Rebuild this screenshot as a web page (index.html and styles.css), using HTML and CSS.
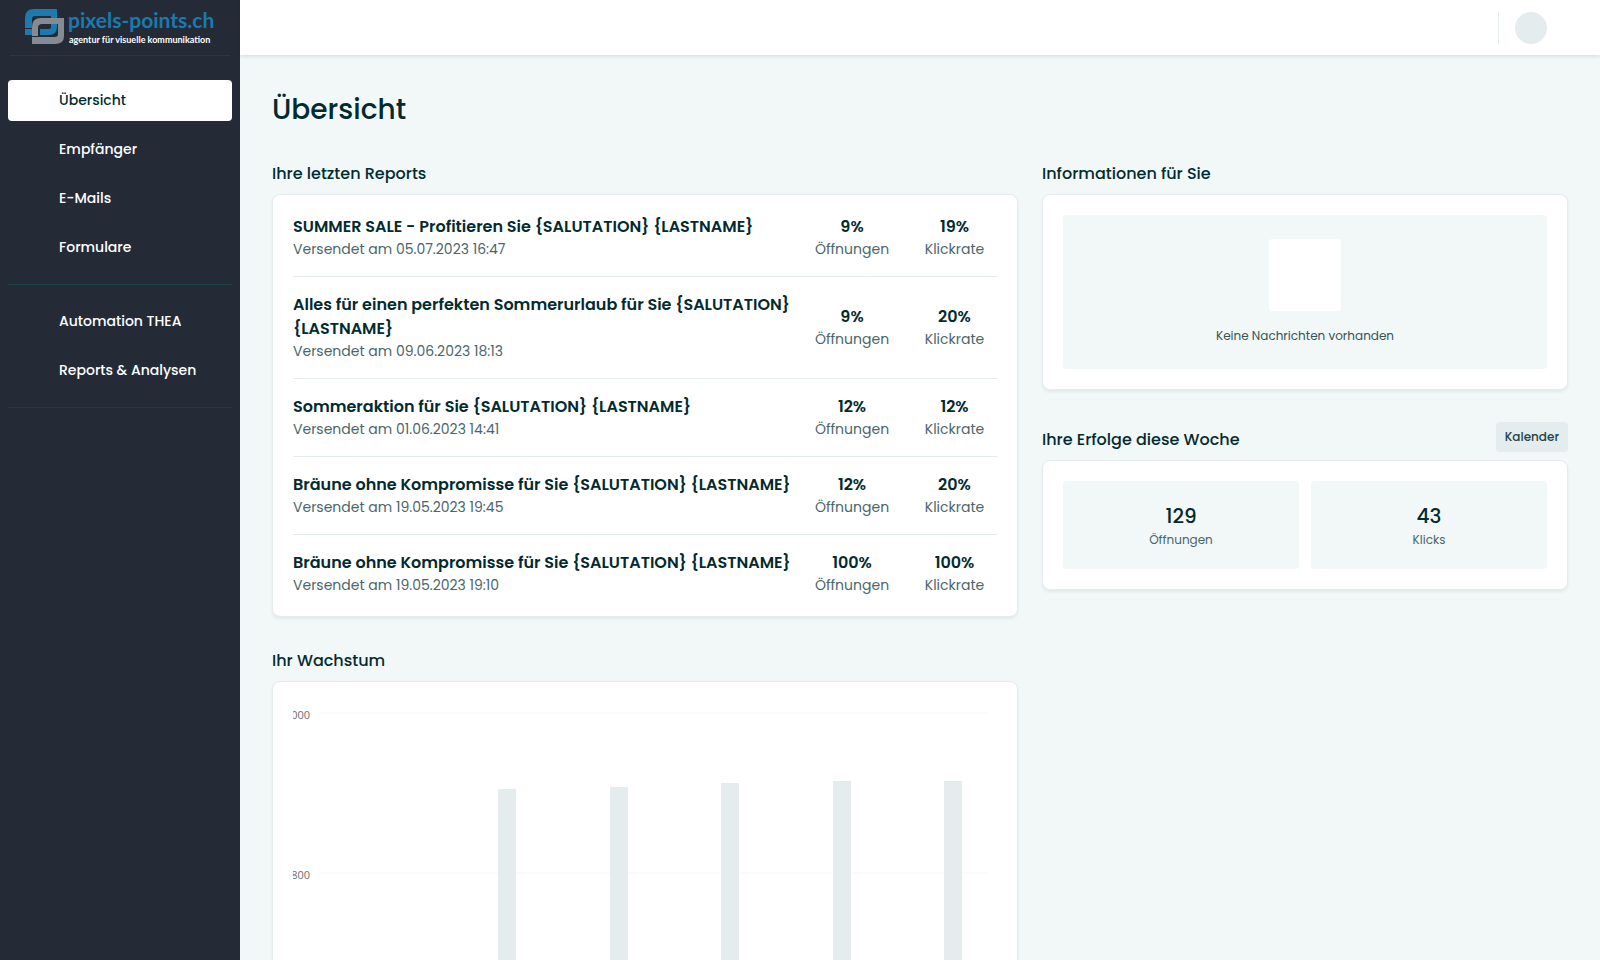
FILE: index.html
```html
<!DOCTYPE html>
<html lang="de">
<head>
    <meta charset="UTF-8">
    <meta name="viewport" content="width=device-width, initial-scale=1">
    <title>Übersicht</title>
    <link rel="stylesheet" href="styles.css">
</head>
<body>
    <aside class="sidebar">
        <a href="#" class="logo">
            <svg width="196" height="38" viewBox="0 0 196 38">
                <path fill="#1b7aae" d="M9 1H32V12H26V8H10Q7 8 7 11V20H0V10Q0 1 9 1Z"/>
                <path fill="#1b7aae" d="M0 21H7V27H0ZM15 21H24Q26 21 26 19V13H32V19Q32 27 24 27H15Z"/>
                <path fill="#868a93" d="M16 10H39V28Q39 36 30 36H7V29H30Q33 29 33 26V16H17Q13 16 13 20V28H7V19Q7 10 16 10Z"/>
                <text class="logo-name" x="43" y="20">pixels-points.ch</text>
                <text class="logo-claim" x="44" y="35">agentur für visuelle kommunikation</text>
            </svg>
        </a>
        <nav class="nav">
            <a href="#" class="nav-link active">Übersicht</a>
            <a href="#" class="nav-link">Empfänger</a>
            <a href="#" class="nav-link">E-Mails</a>
            <a href="#" class="nav-link">Formulare</a>
        </nav>
        <nav class="nav">
            <a href="#" class="nav-link">Automation THEA</a>
            <a href="#" class="nav-link">Reports &amp; Analysen</a>
        </nav>
    </aside>

    <div class="page">
        <header class="topbar">
            <div class="account"><button class="avatar" type="button" aria-label="Konto"></button></div>
        </header>

        <main class="content">
            <h1>Übersicht</h1>
            <div class="row">
                <div class="col-main">
                    <section class="section">
                        <div class="section-head"><h2>Ihre letzten Reports</h2></div>
                        <div class="card">
                            <table class="reports">
                                <tr>
                                    <td><a href="#">SUMMER SALE - Profitieren Sie {SALUTATION} {LASTNAME}</a><span>Versendet am 05.07.2023 16:47</span></td>
                                    <td class="opens"><b>9%</b><span>Öffnungen</span></td>
                                    <td class="clicks"><b>19%</b><span>Klickrate</span></td>
                                </tr>
                                <tr>
                                    <td><a href="#">Alles für einen perfekten Sommerurlaub für Sie {SALUTATION} {LASTNAME}</a><span>Versendet am 09.06.2023 18:13</span></td>
                                    <td class="opens"><b>9%</b><span>Öffnungen</span></td>
                                    <td class="clicks"><b>20%</b><span>Klickrate</span></td>
                                </tr>
                                <tr>
                                    <td><a href="#">Sommeraktion für Sie {SALUTATION} {LASTNAME}</a><span>Versendet am 01.06.2023 14:41</span></td>
                                    <td class="opens"><b>12%</b><span>Öffnungen</span></td>
                                    <td class="clicks"><b>12%</b><span>Klickrate</span></td>
                                </tr>
                                <tr>
                                    <td><a href="#">Bräune ohne Kompromisse für Sie {SALUTATION} {LASTNAME}</a><span>Versendet am 19.05.2023 19:45</span></td>
                                    <td class="opens"><b>12%</b><span>Öffnungen</span></td>
                                    <td class="clicks"><b>20%</b><span>Klickrate</span></td>
                                </tr>
                                <tr>
                                    <td><a href="#">Bräune ohne Kompromisse für Sie {SALUTATION} {LASTNAME}</a><span>Versendet am 19.05.2023 19:10</span></td>
                                    <td class="opens"><b>100%</b><span>Öffnungen</span></td>
                                    <td class="clicks"><b>100%</b><span>Klickrate</span></td>
                                </tr>
                            </table>
                        </div>
                    </section>

                    <section class="section">
                        <div class="section-head"><h2>Ihr Wachstum</h2></div>
                        <div class="card">
                            <svg class="chart" viewBox="0 0 704 840">
                                <g class="grid-lines">
                                    <path d="M25 11H694M25 171H694M25 331H694M25 491H694M25 651H694M25 811H694"/>
                                </g>
                                <g class="axis">
                                    <text x="17" y="17">000</text>
                                    <text x="17" y="177">800</text>
                                </g>
                                <g class="bars">
                                    <rect x="205" y="87" width="18" height="724"/>
                                    <rect x="317" y="85" width="18" height="726"/>
                                    <rect x="428" y="81" width="18" height="730"/>
                                    <rect x="540" y="79" width="18" height="732"/>
                                    <rect x="651" y="79" width="18" height="732"/>
                                </g>
                            </svg>
                        </div>
                    </section>
                </div>

                <div class="col-side">
                    <section class="section">
                        <div class="section-head"><h2>Informationen für Sie</h2></div>
                        <div class="card">
                            <div class="empty">
                                <div class="empty-icon"></div>
                                <p>Keine Nachrichten vorhanden</p>
                            </div>
                        </div>
                    </section>

                    <section class="section">
                        <div class="section-head">
                            <h2>Ihre Erfolge diese Woche</h2>
                            <button class="btn" type="button">Kalender</button>
                        </div>
                        <div class="card stats">
                            <div class="stat"><strong>129</strong><span>Öffnungen</span></div>
                            <div class="stat"><strong>43</strong><span>Klicks</span></div>
                        </div>
                    </section>
                </div>
            </div>
        </main>
    </div>
</body>
</html>
```
FILE: styles.css
```css
* {
    box-sizing: border-box;
}

body {
    display: flex;
    height: 100vh;
    margin: 0;
    overflow: hidden;
    background: #f2f8f8;
    color: #022b30;
    font-family: Poppins, Inter, sans-serif;
    font-size: 14px;
    line-height: 21px;
}

h1, h2, p {
    margin: 0;
}

a {
    color: inherit;
    text-decoration: none;
}

/* Sidebar */
.sidebar {
    flex: 0 0 240px;
    padding: 0 8px;
    background: #242b37;
}

.logo {
    display: block;
    height: 56px;
    margin: 0 2px 24px;
    padding: 8px 0 0 15px;
    border-bottom: 1px solid #203f45;
}

.logo svg {
    display: block;
}

.logo-name {
    fill: #1b7aae;
    font: bold 21px Lato, sans-serif;
}

.logo-claim {
    fill: #fff;
    font: bold 9px Lato, sans-serif;
}

.nav {
    display: flex;
    flex-direction: column;
    gap: 8px;
    margin-bottom: 16px;
    padding-bottom: 16px;
    border-bottom: 1px solid #1b4145;
}

.nav-link {
    padding: 10px 12px 10px 51px;
    border-radius: 4px;
    color: #fff;
    font-weight: 500;
}

.nav-link.active {
    background: #fff;
    color: #022b30;
}

/* Page */
.page {
    display: flex;
    flex: 1;
    flex-direction: column;
    min-width: 0;
}

.topbar {
    z-index: 1;
    display: flex;
    flex: 0 0 55px;
    align-items: center;
    justify-content: flex-end;
    padding-right: 53px;
    background: #fff;
    box-shadow: 0 1px 4px rgba(2, 43, 48, 0.15);
}

.account {
    padding-left: 16px;
    border-left: 1px solid #e4ecee;
}

.avatar {
    display: block;
    width: 32px;
    height: 32px;
    padding: 0;
    border: none;
    border-radius: 50%;
    background: #e4ecee;
}

.content {
    flex: 1;
    padding: 32px;
    overflow-y: auto;
    scrollbar-width: none;
}

h1 {
    margin-bottom: 30px;
    font-size: 28px;
    font-weight: 500;
    line-height: 45px;
}

h2 {
    font-size: 16px;
    font-weight: 500;
    line-height: 24px;
}

.row {
    display: grid;
    grid-template-columns: repeat(12, 1fr);
    gap: 24px;
}

.col-main {
    grid-column: span 7;
}

.col-side {
    grid-column: span 5;
}

.section {
    margin-bottom: 32px;
}

.section-head {
    display: flex;
    align-items: flex-end;
    justify-content: space-between;
    margin-bottom: 8px;
}

.card {
    padding: 20px;
    border: 1px solid #e4ecee;
    border-radius: 8px;
    background: #fff;
    box-shadow: 0 2px 3px rgba(2, 43, 48, 0.07);
}

.btn {
    height: 30px;
    padding: 0 9px;
    border: none;
    border-radius: 4px;
    background: #e4ecee;
    color: #1d4449;
    font: 500 12px Poppins, Inter, sans-serif;
}

/* Reports */
.reports {
    width: 100%;
    border-collapse: collapse;
}

.reports td {
    padding: 16px 0;
    border-bottom: 1px solid #e4ecee;
}

.reports tr:first-child td {
    padding-top: 0;
}

.reports tr:last-child td {
    padding-bottom: 0;
    border-bottom: none;
}

.reports a,
.reports b {
    display: block;
    font-size: 16px;
    font-weight: 600;
    line-height: 24px;
}

.reports span {
    display: block;
    color: #4a666b;
}

.reports .opens {
    width: 120px;
    text-align: center;
}

.reports .clicks {
    width: 85px;
    text-align: center;
}

/* Chart */
.chart {
    display: block;
    width: 100%;
    overflow: hidden;
}

.grid-lines {
    fill: none;
    stroke: #fafbfb;
    stroke-width: 2;
}

.axis {
    fill: #6e6e6e;
    font: 11px "Open Sans", sans-serif;
    text-anchor: end;
}

.bars {
    fill: #e4ecee;
}

/* Side cards */
.empty {
    display: flex;
    flex-direction: column;
    align-items: center;
    gap: 16px;
    padding: 24px;
    border-radius: 4px;
    background: #f2f8f8;
    color: #355459;
    font-size: 12px;
    line-height: 18px;
}

.empty-icon {
    width: 72px;
    height: 72px;
    border-radius: 4px;
    background: #fff;
}

.stats {
    display: flex;
    gap: 12px;
}

.stat {
    flex: 1;
    padding: 20px;
    border-radius: 4px;
    background: #f2f8f8;
    text-align: center;
}

.stat strong {
    display: block;
    font-size: 20px;
    font-weight: 500;
    line-height: 30px;
}

.stat span {
    display: block;
    color: #4a666b;
    font-size: 12px;
    line-height: 18px;
}
```
